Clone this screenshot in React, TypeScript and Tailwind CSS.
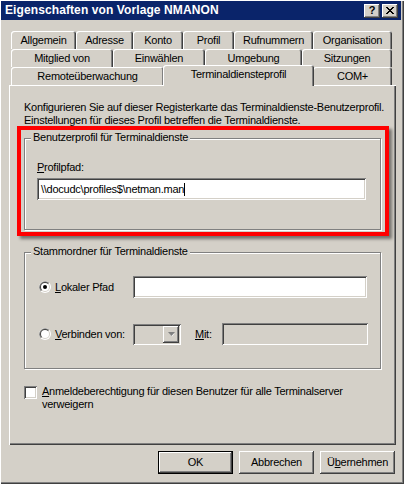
import React from 'react';

const raised = 'shadow-[inset_-1px_-1px_#404040,inset_1px_1px_#fff,inset_-2px_-2px_#808080]';
const sunken = 'shadow-[inset_1px_1px_#808080,inset_-1px_-1px_#fff,inset_2px_2px_#404040,inset_-2px_-2px_#d4d0c8]';

type TabDef = { label: string; w: string; selected?: boolean };

const rows: TabDef[][] = [
  [
    { label: 'Allgemein', w: 'w-[65px]' },
    { label: 'Adresse', w: 'w-[57px]' },
    { label: 'Konto', w: 'w-[50px]' },
    { label: 'Profil', w: 'w-[51px]' },
    { label: 'Rufnummern', w: 'w-[79px]' },
    { label: 'Organisation', w: 'w-[79px]' },
  ],
  [
    { label: 'Mitglied von', w: 'w-[102px]' },
    { label: 'Einwählen', w: 'w-[92px]' },
    { label: 'Umgebung', w: 'w-[97px]' },
    { label: 'Sitzungen', w: 'w-[90px]' },
  ],
  [
    { label: 'Remoteüberwachung', w: 'w-[153px]' },
    { label: 'Terminaldiensteprofil', w: 'w-[151px]', selected: true },
    { label: 'COM+', w: 'w-[79px]' },
  ],
];

const Tab = ({ tab }: { tab: TabDef }) =>
  tab.selected ? (
    <div
      className={`${tab.w} relative z-10 -mt-[2px] -mx-[1px] h-[21px] shrink-0 flex items-start justify-center pt-[3px] bg-[#d4d0c8] rounded-t-[3px] shadow-[inset_1px_1px_#fff,inset_-1px_0_#404040,inset_-2px_0_#808080]`}
    >
      {tab.label}
    </div>
  ) : (
    <div
      className={`${tab.w} h-[18px] shrink-0 flex items-center justify-center pt-[1px] bg-[#d4d0c8] rounded-t-[3px] shadow-[inset_1px_1px_#fff,inset_-1px_0_#404040,inset_-2px_0_#808080]`}
    >
      {tab.label}
    </div>
  );

const Radio = ({ checked }: { checked?: boolean }) => (
  <svg width="12" height="12" viewBox="0 0 12 12" className="shrink-0">
    <circle cx="6" cy="6" r="6" fill="#fff" />
    <path d="M1.76 10.24 A6 6 0 0 1 10.24 1.76 Z" fill="#808080" />
    <circle cx="6" cy="6" r="5" fill="#d4d0c8" />
    <path d="M2.46 9.54 A5 5 0 0 1 9.54 2.46 Z" fill="#404040" />
    <circle cx="6" cy="6" r="4" fill="#fff" />
    {checked && <circle cx="6" cy="6" r="2" fill="#000" />}
  </svg>
);

const GroupBox = ({ title, className, children }: { title: string; className: string; children: React.ReactNode }) => (
  <div className={`relative border border-[#808080] shadow-[1px_1px_0_#fff,inset_1px_1px_0_#fff] ${className}`}>
    <span className="absolute left-[6px] top-[-8px] px-[2px] bg-[#d4d0c8] whitespace-nowrap">{title}</span>
    {children}
  </div>
);

const Button = ({ children, isDefault }: { children: React.ReactNode; isDefault?: boolean }) => (
  <button
    className={`w-[75px] h-[23px] flex items-center justify-center bg-[#d4d0c8] ${
      isDefault
        ? 'border border-black shadow-[inset_-1px_-1px_#404040,inset_1px_1px_#fff,inset_-2px_-2px_#808080]'
        : raised
    }`}
  >
    {children}
  </button>
);

export default function App() {
  return (
    <div
      className={`w-[404px] h-[484px] overflow-hidden bg-[#d4d0c8] pl-[1px] pt-[1px] pr-[3px] flex flex-col text-black text-[11px] leading-[13px] font-['Liberation_Sans',Arial,sans-serif] tracking-[-0.25px] shadow-[inset_1px_1px_#fff,inset_-1px_-1px_#404040,inset_-2px_-2px_#808080]`}
    >
      {/* title bar */}
      <div className="h-[19px] bg-[#0a246a] flex items-center pl-[4px] pr-[3px]">
        <span className="text-white font-bold text-[12px] tracking-[0.1px]">Eigenschaften von Vorlage NMANON</span>
        <div className="ml-auto flex gap-[2px]">
          <div className={`w-[16px] h-[14px] bg-[#d4d0c8] ${raised} flex items-center justify-center font-bold text-[11px] leading-none pb-[1px]`}>
            ?
          </div>
          <div className={`w-[16px] h-[14px] bg-[#d4d0c8] ${raised} flex items-center justify-center pb-[1px]`}>
            <svg width="8" height="7" viewBox="0 0 8 7">
              <path d="M0 0h2v1h1v1h2v-1h1v-1h2v1h-1v1h-1v1h-1v1h1v1h1v1h1v1h-2v-1h-1v-1h-2v1h-1v1h-2v-1h1v-1h1v-1h1v-1h-1v-1h-1v-1h-1z" fill="#000" />
            </svg>
          </div>
        </div>
      </div>

      {/* tabs */}
      <div className="ml-[10px] mt-[11px] flex flex-col">
        {rows.map((row, i) => (
          <div key={i} className="flex h-[18px]">
            {row.map((t) => (
              <Tab key={t.label} tab={t} />
            ))}
          </div>
        ))}
      </div>

      {/* panel */}
      <div className="ml-[8px] w-[387px] h-[360px] shrink-0 flex flex-col shadow-[inset_1px_1px_#fff,inset_-1px_-1px_#404040,inset_-2px_-2px_#808080]">
        <p className="ml-[15px] mt-[16px] whitespace-nowrap">
          Konfigurieren Sie auf dieser Registerkarte das Terminaldienste-Benutzerprofil.
          <br />
          Einstellungen für dieses Profil betreffen die Terminaldienste.
        </p>

        <div className="ml-[8px] -mt-[1px] w-[372px] h-[110px] shrink-0 border-4 border-[#ff0000] shadow-[3px_3px_3px_rgba(0,0,0,0.45)]">
          <GroupBox title="Benutzerprofil für Terminaldienste" className="ml-[3px] mt-[8px] w-[357px] h-[92px]">
            <div className="ml-[12px] mt-[22px]">
              <u>P</u>rofilpfad:
            </div>
            <div className={`ml-[12px] mt-[4px] w-[329px] h-[22px] bg-white ${sunken} flex items-center pl-[4px]`}>
              <span className="whitespace-nowrap">\\docudc\profiles$\netman.man</span>
              <span className="w-[1px] h-[13px] bg-black" />
            </div>
          </GroupBox>
        </div>

        <GroupBox title="Stammordner für Terminaldienste" className="ml-[15px] mt-[16px] w-[357px] h-[117px] shrink-0">
          <div className="mt-[23px] h-[22px] flex items-center">
            <div className="ml-[14px] w-[94px] flex items-center gap-[4px]">
              <Radio checked />
              <span>
                <u>L</u>okaler Pfad
              </span>
            </div>
            <div className={`w-[234px] h-[22px] bg-white ${sunken}`} />
          </div>
          <div className="mt-[25px] h-[22px] flex items-center">
            <div className="ml-[14px] w-[94px] flex items-center gap-[4px]">
              <Radio />
              <span className="whitespace-nowrap">
                <u>V</u>erbinden von:
              </span>
            </div>
            <div className={`w-[48px] h-[21px] bg-[#d4d0c8] ${sunken} flex items-center justify-end pr-[2px]`}>
              <div className={`w-[16px] h-[17px] bg-[#d4d0c8] ${raised} flex items-center justify-center`}>
                <svg width="7" height="5" viewBox="0 0 7 5">
                  <path d="M1 1h5l-2.5 3z" fill="#fff" transform="translate(0.5 0.5)" />
                  <path d="M0 0h7L3.5 4z" fill="#808080" />
                </svg>
              </div>
            </div>
            <span className="ml-[14px] w-[27px]">
              <u>M</u>it:
            </span>
            <div className={`w-[146px] h-[22px] bg-[#d4d0c8] ${sunken}`} />
          </div>
        </GroupBox>

        <div className="ml-[15px] mt-[17px] flex items-start">
          <div className={`w-[13px] h-[13px] shrink-0 bg-white ${sunken}`} />
          <p className="ml-[5px] -mt-[1px] whitespace-nowrap">
            <u>A</u>nmeldeberechtigung für diesen Benutzer für alle Terminalserver
            <br />
            verweigern
          </p>
        </div>
      </div>

      {/* buttons */}
      <div className="ml-[8px] w-[387px] mt-[6px] pr-[1px] flex justify-end gap-[6px]">
        <Button isDefault>OK</Button>
        <Button>Abbrechen</Button>
        <Button>
          Ü<u>b</u>ernehmen
        </Button>
      </div>
    </div>
  );
}
